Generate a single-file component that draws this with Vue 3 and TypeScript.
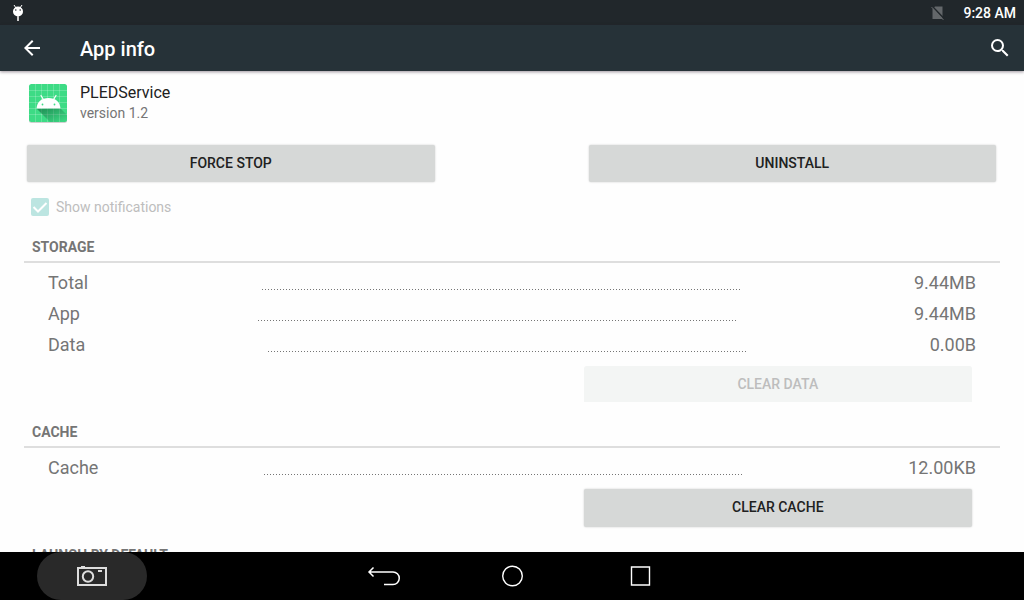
<script setup lang="ts">
import { ref } from 'vue'

interface Entry {
  label: string
  value: string
}

interface Section {
  title: string
  entries: Entry[]
  action?: string
  disabled?: boolean
}

const notifications = ref(true)

const sections: Section[] = [
  {
    title: 'STORAGE',
    entries: [
      { label: 'Total', value: '9.44MB' },
      { label: 'App', value: '9.44MB' },
      { label: 'Data', value: '0.00B' },
    ],
    action: 'CLEAR DATA',
    disabled: true,
  },
  {
    title: 'CACHE',
    entries: [{ label: 'Cache', value: '12.00KB' }],
    action: 'CLEAR CACHE',
  },
  { title: 'LAUNCH BY DEFAULT', entries: [] },
]
</script>

<template>
  <div class="screen">
    <div class="status">
      <svg class="debug" width="12" height="18" viewBox="0 0 12 18" aria-hidden="true">
        <path d="M2 1l2 3M10 1L8 4" stroke="#fff" stroke-width="1" />
        <ellipse cx="6" cy="7.500" rx="5" ry="5" fill="#fff" />
        <path d="M5 12h2v5H5z" fill="#ccc" />
        <circle cx="3.800" cy="6" r="0.800" fill="#21272b" />
        <circle cx="8.200" cy="6" r="0.800" fill="#21272b" />
      </svg>
      <svg class="sim" width="14" height="16" viewBox="0 0 14 16" aria-hidden="true">
        <path d="M4 1.500h7.500v12.500H1.500V4z" fill="#63676a" />
        <path d="M1 1l12.500 13" stroke="#21272b" stroke-width="1.500" />
        <path d="M0.500 2l12 13" stroke="#63676a" stroke-width="1" />
      </svg>
      <time>9:28 AM</time>
    </div>

    <header class="bar">
      <button class="icon" aria-label="Back">
        <svg width="24" height="24" viewBox="0 0 24 24">
          <path d="M20 11H7.830l5.590-5.590L12 4l-8 8 8 8 1.410-1.410L7.830 13H20v-2z" fill="#fff" />
        </svg>
      </button>
      <h1>App info</h1>
      <button class="icon" aria-label="Search">
        <svg width="24" height="24" viewBox="0 0 24 24">
          <path d="M15.500 14h-.79l-.28-.27A6.471 6.471 0 0 0 16 9.500 6.500 6.500 0 1 0 9.500 16c1.610 0 3.090-.59 4.230-1.570l.27.28v.79l5 4.990L20.490 19l-4.990-5zm-6 0C7.010 14 5 11.990 5 9.500S7.010 5 9.500 5 14 7.010 14 9.500 11.990 14 9.500 14z" fill="#fff" />
        </svg>
      </button>
    </header>

    <main>
      <div class="app">
        <svg class="logo" width="40" height="41" viewBox="0 0 40 41" aria-hidden="true">
          <defs>
            <linearGradient id="cast" x1="0" y1="0" x2="1" y2="1">
              <stop offset="0.200" stop-color="#0b5a33" stop-opacity=".5" />
              <stop offset="0.900" stop-color="#0b5a33" stop-opacity=".05" />
            </linearGradient>
          </defs>
          <rect x="1" y="2" width="38" height="38" rx="2.500" fill="#000" opacity=".18" />
          <rect x="1" y="1" width="38" height="38" rx="2.500" fill="#3ddb85" />
          <path d="M7.500 1v38M13.500 1v38M19.500 1v38M25.500 1v38M31.500 1v38M1 7.500h38M1 13.500h38M1 19.500h38M1 25.500h38M1 31.500h38" stroke="#fff" stroke-opacity=".2" />
          <path d="M8.500 25.500L22 39h14.500q2.500 0 2.500-2.500V32L32 25z" fill="url(#cast)" />
          <path d="M13 12.500l3 5M28 12.500l-3 5" stroke="#fff" stroke-width="1.200" stroke-linecap="round" />
          <path d="M8.500 25.500C9 19 13.500 15 20.500 15S32 19 32.500 25.500z" fill="#fff" />
          <circle cx="14.500" cy="21.500" r="0.900" fill="#3ddb85" />
          <circle cx="26.500" cy="21.500" r="0.900" fill="#3ddb85" />
        </svg>
        <div>
          <div class="name">PLEDService</div>
          <div class="version">version 1.2</div>
        </div>
      </div>

      <div class="actions">
        <button class="btn">FORCE STOP</button>
        <button class="btn">UNINSTALL</button>
      </div>

      <label class="check">
        <span class="box">
          <input v-model="notifications" type="checkbox" disabled />
          <svg v-if="notifications" width="18" height="18" viewBox="0 0 18 18" aria-hidden="true">
            <path d="M2.500 9l4.500 4.500L15.500 5" fill="none" stroke="#fff" stroke-width="2" />
          </svg>
        </span>
        Show notifications
      </label>

      <section v-for="s in sections" :key="s.title">
        <h2>{{ s.title }}</h2>
        <dl>
          <div v-for="e in s.entries" :key="e.label" class="entry">
            <dt>{{ e.label }}</dt>
            <dd class="dots" aria-hidden="true"></dd>
            <dd>{{ e.value }}</dd>
          </div>
        </dl>
        <button v-if="s.action" class="btn clear" :disabled="s.disabled">{{ s.action }}</button>
      </section>
    </main>

    <nav>
      <button class="shot" aria-label="Screenshot">
        <svg width="32" height="24" viewBox="0 0 32 24">
          <path d="M2 4h28v17H2z" fill="none" stroke="#ddd" stroke-width="2" />
          <path d="M5 2h4v2H5zM22 6h4v2h-4z" fill="#ddd" />
          <circle cx="12" cy="12.500" r="5.200" fill="none" stroke="#ddd" stroke-width="2" />
        </svg>
      </button>
      <div class="keys">
        <button aria-label="Back">
          <svg width="34" height="24" viewBox="0 0 34 24">
            <path d="M6.500 3.500L2 8l4.500 4.500M2 8h24a6.250 6.250 0 0 1 0 12.500H17" fill="none" stroke="#fff" stroke-width="1.500" />
          </svg>
        </button>
        <button aria-label="Home">
          <svg width="24" height="24" viewBox="0 0 24 24">
            <circle cx="12.500" cy="12" r="9.800" fill="none" stroke="#fff" stroke-width="1.400" />
          </svg>
        </button>
        <button aria-label="Recent apps">
          <svg width="24" height="24" viewBox="0 0 24 24">
            <path d="M3.500 3h18v18h-18z" fill="none" stroke="#fff" stroke-width="1.400" />
          </svg>
        </button>
      </div>
    </nav>
  </div>
</template>

<style>
body {
  margin: 0;
}
</style>

<style scoped>
* {
  box-sizing: border-box;
}
.screen {
  display: flex;
  flex-direction: column;
  height: 100vh;
  overflow: hidden;
  background: #fefefe;
  font-family: Roboto, 'Noto Sans', sans-serif;
  color: #212121;
}
svg {
  display: block;
}
button {
  border: 0;
  padding: 0;
  background: none;
  font: inherit;
  color: inherit;
}
.status {
  flex: none;
  display: flex;
  align-items: center;
  height: 25px;
  padding: 0 8px 0 12px;
  background: #21272b;
  color: #fff;
  font-size: 14px;
  font-weight: 500;
}
.sim {
  margin-left: auto;
  margin-right: 18px;
}
.bar {
  flex: none;
  display: flex;
  align-items: center;
  height: 46px;
  padding: 0 12px 0 20px;
  background: #263238;
  color: #fff;
  box-shadow: 0 1px 3px rgba(40, 20, 40, 0.45);
  z-index: 1;
}
h1 {
  flex: 1;
  margin: 0 0 0 36px;
  padding-top: 2px;
  font-size: 20px;
  line-height: 24px;
  font-weight: 500;
}
main {
  flex: 1;
  min-height: 0;
  overflow-y: auto;
  scrollbar-width: none;
  padding: 12px 24px 0;
}
.app {
  display: flex;
  gap: 12px;
  padding-left: 4px;
}
.name {
  font-size: 16px;
  line-height: 20px;
}
.version {
  font-size: 14px;
  line-height: 20px;
  color: #757575;
}
.actions {
  display: flex;
  gap: 154px;
  margin-top: 21px;
  padding: 0 4px 0 3px;
}
.btn {
  flex: 1;
  height: 37px;
  padding-bottom: 2px;
  border-radius: 2px;
  background: #d6d8d7;
  box-shadow: 0 0 2px rgba(0, 0, 0, 0.22);
  font-size: 14px;
  font-weight: 500;
}
.check {
  display: flex;
  align-items: center;
  gap: 7px;
  margin-top: 15px;
  padding-left: 7px;
  font-size: 14px;
  line-height: 20px;
  color: #bdbdbd;
}
.box {
  position: relative;
}
.box input {
  display: block;
  appearance: none;
  width: 18px;
  height: 18px;
  margin: 0;
  border-radius: 2px;
  background: #bce5e1;
}
.box svg {
  position: absolute;
  inset: 0;
}
section {
  margin-top: 16px;
}
.check + section {
  margin-top: 18px;
}
h2 {
  margin: 0;
  padding: 0 8px 2px;
  border-bottom: 2px solid #dedede;
  font-size: 14px;
  line-height: 24px;
  font-weight: 700;
  color: #757575;
}
dl {
  margin: 0;
  padding: 4px 24px 6px;
}
.entry {
  display: flex;
  justify-content: space-between;
  font-size: 18px;
  line-height: 31px;
  color: #757575;
}
dd {
  margin: 0;
}
.dots {
  width: calc(52% - 4px);
  height: 23px;
  background: repeating-linear-gradient(to right, #757575 0 1px, transparent 1px 3px) left bottom / 100% 1px no-repeat;
}
.clear {
  display: block;
  width: calc(40% - 2px);
  height: 38px;
  margin: 0 28px 0 auto;
}
.clear:disabled {
  padding-bottom: 0;
  border-bottom: 2px solid transparent;
  background: #f3f5f4;
  background-clip: padding-box;
  box-shadow: none;
  color: #bdbdbd;
}
nav {
  flex: none;
  display: grid;
  grid-template-columns: 1fr auto 1fr;
  height: 48px;
  background: #000;
}
.shot {
  display: grid;
  place-items: center;
  width: 110px;
  margin-left: 37px;
  border-radius: 24px;
  background: #292929;
}
.keys {
  display: flex;
}
.keys button {
  display: grid;
  place-items: center;
  width: 128px;
}
</style>
